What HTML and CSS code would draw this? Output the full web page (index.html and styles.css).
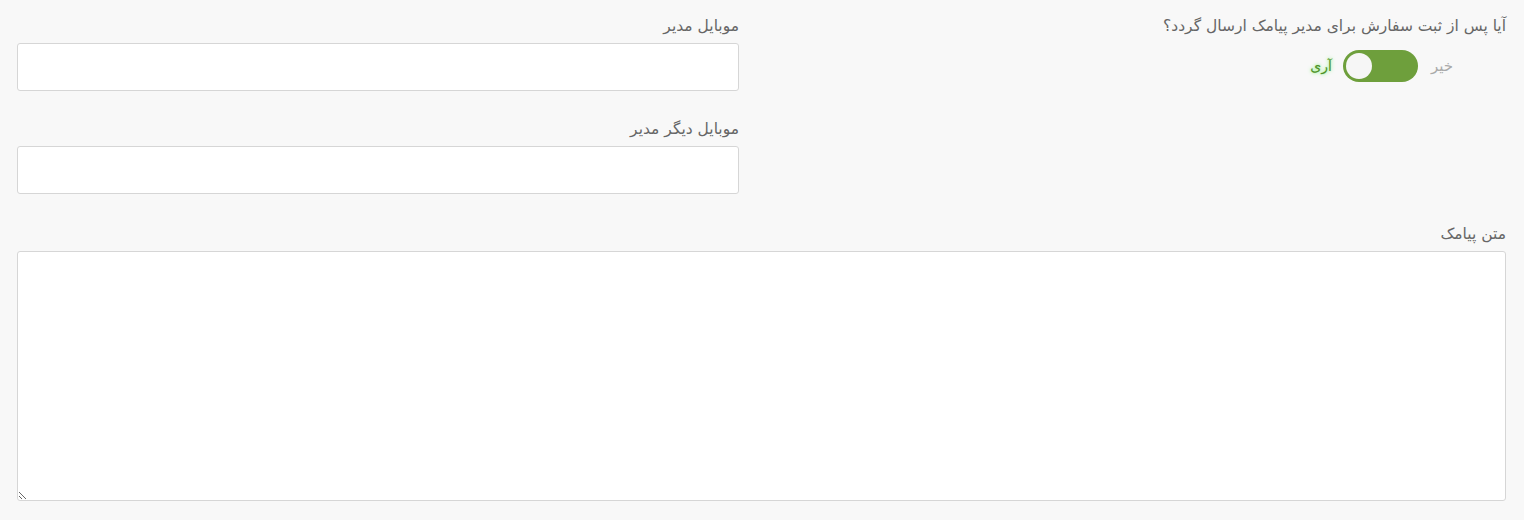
FILE: index.html
```html
<!DOCTYPE html>
<html lang="fa" dir="rtl">
<head>
<meta charset="utf-8">
<link rel="stylesheet" href="styles.css">
</head>
<body>
<div class="page">
  <div class="row">
    <div class="col col-right">
      <label class="lbl">آیا پس از ثبت سفارش برای مدیر پیامک ارسال گردد؟</label>
      <div class="switch-row">
        <span class="opt-no">خیر</span>
        <span class="track"><span class="knob"></span></span>
        <span class="opt-yes">آری</span>
      </div>
    </div>
    <div class="col col-left">
      <div class="group">
        <label class="lbl">موبایل مدیر</label>
        <input class="field" type="text">
      </div>
      <div class="group">
        <label class="lbl">موبایل دیگر مدیر</label>
        <input class="field" type="text">
      </div>
    </div>
  </div>
  <div class="group group-full">
    <label class="lbl">متن پیامک</label>
    <textarea class="area"></textarea>
  </div>
</div>
</body>
</html>
```

FILE: styles.css
```css
html, body {
  margin: 0;
  padding: 0;
  background: #f8f8f8;
}
body {
  font-family: "DejaVu Sans", "Noto Sans", sans-serif;
  color: #666;
  direction: rtl;
}
.page {
  padding: 16px 18px 0 17px;
}
.row {
  display: grid;
  grid-template-columns: 744px 722px;
  column-gap: 23px;
}
.lbl {
  display: block;
  font-size: 15.5px;
  line-height: 20px;
  margin-bottom: 7px;
  color: #666;
}
.group {
  margin-bottom: 28px;
}
.group-full {
  margin-top: 2px;
}
.field {
  display: block;
  box-sizing: border-box;
  width: 100%;
  height: 48px;
  border: 1px solid #d6d6d6;
  border-radius: 3px;
  background: #fff;
  margin: 0;
}
.area {
  display: block;
  box-sizing: border-box;
  width: 100%;
  height: 250px;
  border: 1px solid #d6d6d6;
  border-radius: 3px;
  background: #fff;
  margin: 0;
  resize: vertical;
}
.switch-row {
  display: flex;
  align-items: center;
  padding-right: 53px;
  margin-top: 14px;
  height: 32px;
}
.opt-no {
  font-size: 15px;
  color: #aaa;
  margin-left: 13px;
}
.track {
  position: relative;
  display: block;
  width: 75px;
  height: 32px;
  border-radius: 16px;
  background: #6e9f3c;
}
.knob {
  position: absolute;
  left: 3px;
  top: 3px;
  width: 26px;
  height: 26px;
  border-radius: 50%;
  background: #f6f6f6;
}
.opt-yes {
  font-size: 14px;
  color: #4f9028;
  margin-right: 11px;
  text-shadow: 0 0 4px #8ef08a, 0 0 2px #b6f5a8;
}
```
